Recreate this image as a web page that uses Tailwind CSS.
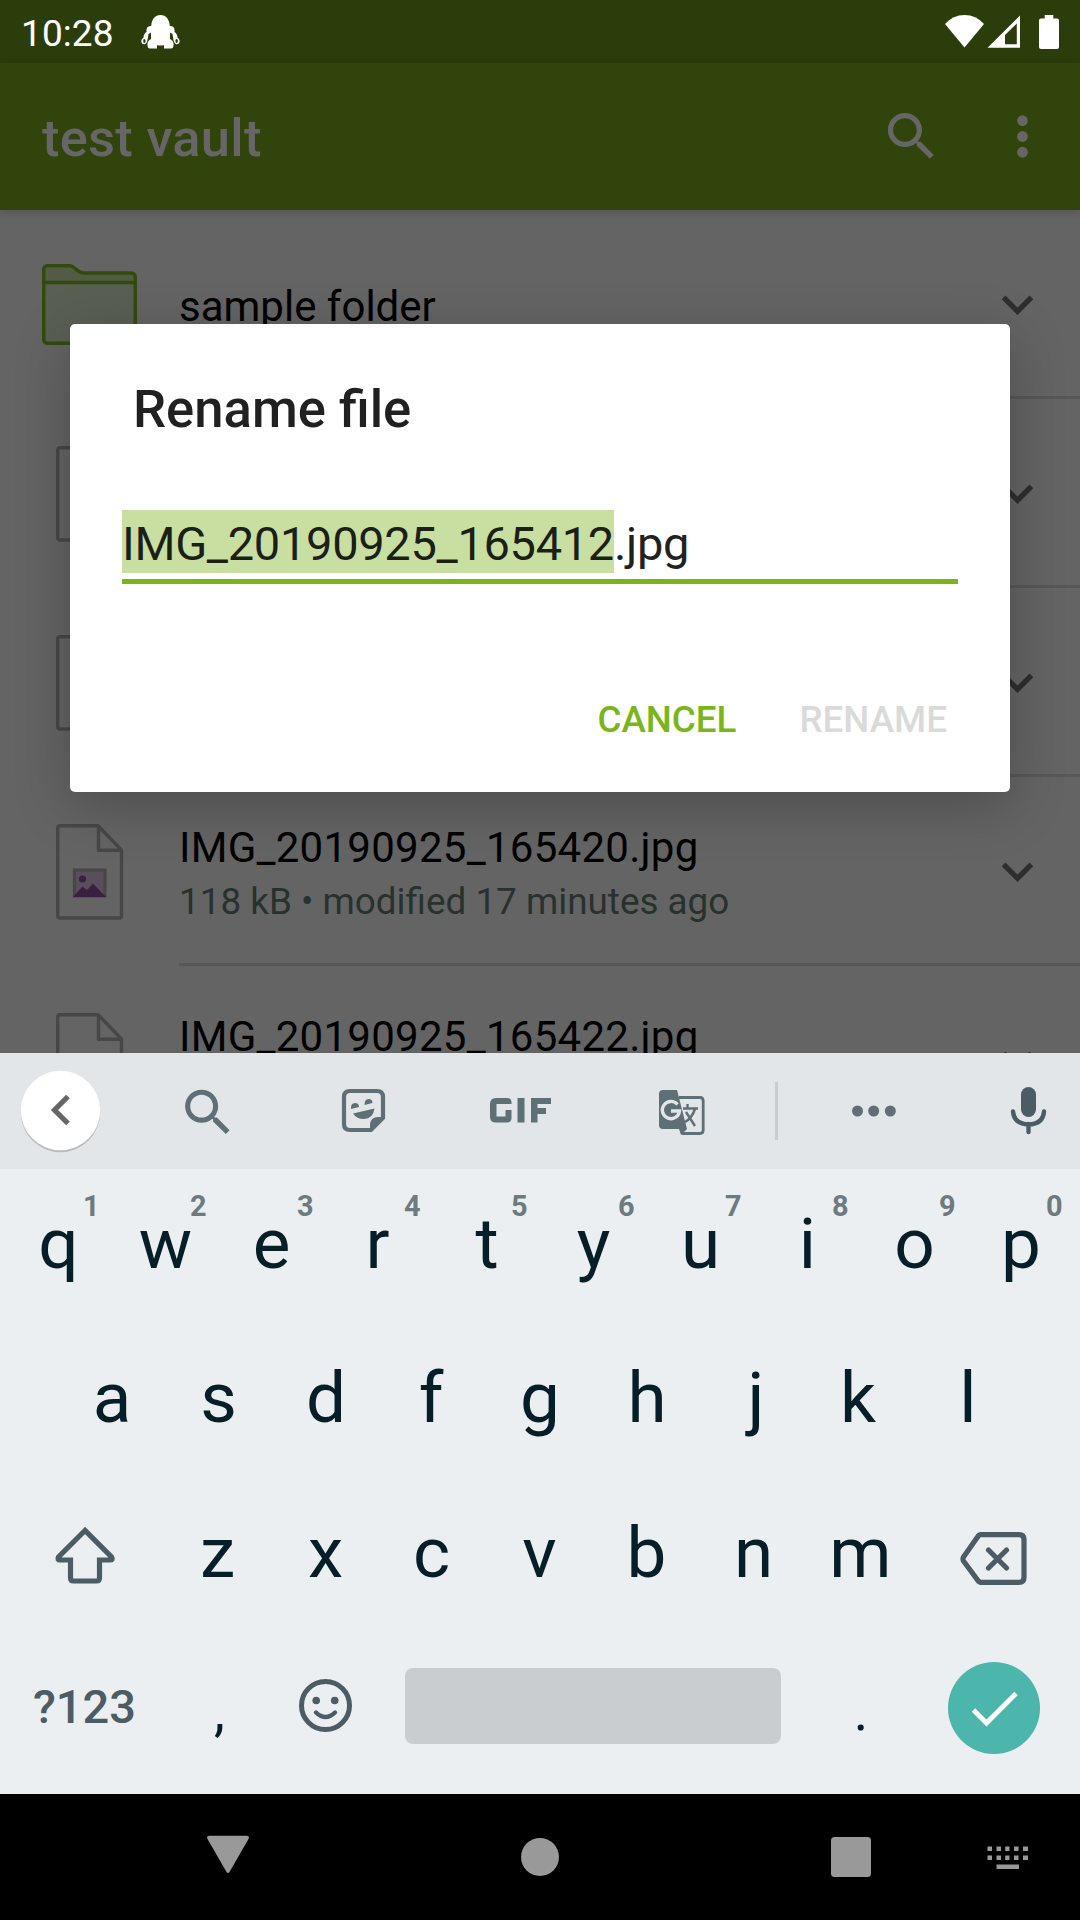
<!DOCTYPE html>
<html lang="en">
<head>
<meta charset="utf-8">
<title>Rename file</title>
<script src="https://cdn.jsdelivr.net/npm/@tailwindcss/browser@4"></script>
</head>
<body class="w-[1080px] h-[1920px] overflow-hidden bg-black font-['Roboto',sans-serif]">
<svg class="hidden">
  <symbol id="file" viewBox="0 0 68 96">
    <path d="M4 1.7H42L65.500 26V92Q65.500 94 63.500 94H4Q1.7 94 1.7 92V4Q1.7 1.7 4 1.7Z M42.5 2V26.2H66" fill="none" stroke="#474747" stroke-width="3.4" stroke-linejoin="round"/>
    <path d="M18.5 46H49V72H18.5Z" fill="#594e5b" stroke="#474747" stroke-width="3.2"/>
    <path d="M17 73L26.5 62.5L31 66L37 59.5L50 73Z" fill="#392040"/>
    <circle cx="26.5" cy="55" r="3.6" fill="#392040"/>
  </symbol>
  <symbol id="chev" viewBox="0 0 24 24"><path d="M7.41 8.59 12 13.17l4.59-4.58L18 10l-6 6-6-6z" fill="#2e2e2e"/></symbol>
  <symbol id="search" viewBox="0 0 24 24"><path fill="currentColor" d="M15.5 14h-.79l-.28-.27C15.41 12.59 16 11.11 16 9.5 16 5.91 13.09 3 9.5 3S3 5.91 3 9.5 5.91 16 9.5 16c1.61 0 3.09-.59 4.23-1.57l.27.28v.79l5 4.99L20.49 19l-4.99-5zm-6 0C7.01 14 5 11.99 5 9.5S7.01 5 9.5 5 14 7.01 14 9.5 11.99 14 9.5 14z"/></symbol>
</svg>
<div class="relative flex h-[1053px] flex-col overflow-hidden bg-[#646464]">
  <!-- status bar -->
  <div class="flex h-[63px] shrink-0 items-center bg-[#2a3d0a] pl-[21px] pr-[21px] text-white">
    <div class="w-[120px] pt-[4px] text-[37px] leading-[59px] tracking-[0.1px]">10:28</div>
    <svg class="h-[34px] w-[39px]" viewBox="0 0 39 34" fill="#fff">
      <path d="M19.500 0C25 0 28.500 4.500 28.800 11Q33.500 11 33.500 15V17Q36.500 19 36.500 22.500Q39.200 24.500 38.600 27Q38 29.500 35.500 29.200Q33 28.500 32.500 25L31.500 19L29 17.500V24Q33 26 32.500 30Q32.500 33.500 30 33.500H23V30Q21 30.800 19.500 30.500Q18 30.800 16 30V33.500H9Q6.500 33.500 6.500 30Q6 26 10 24V17.500L7.500 19L6.500 25Q6 28.500 3.500 29.200Q1 29.500 .4 27Q-.2 24.500 2.500 22.500Q2.500 19 5.500 17V15Q5.500 11 10.200 11C10.500 4.500 14 0 19.500 0Z"/>
      <ellipse cx="3.400" cy="26" rx="1.200" ry="2.100" fill="#2a3d0a"/><ellipse cx="35.600" cy="26" rx="1.200" ry="2.100" fill="#2a3d0a"/>
    </svg>
    <svg class="ml-auto h-[34px] w-[114px]" viewBox="945 14 114 34" fill="#fff">
      <path d="M945 23Q953 14 964.500 14Q976 14 984 23L964.500 46.600Z"/>
      <path fill-rule="evenodd" d="M987.500 46.800L1020 14.500V46.800ZM1005 43.200H1016.800V22.500L1005 34Z"/>
      <path d="M1044.700 14H1053.300V17.500H1057Q1059 17.500 1059 19.500V46Q1059 48 1057 48H1041Q1039 48 1039 46V19.500Q1039 17.500 1041 17.500H1044.700Z"/>
    </svg>
  </div>
  <!-- app bar -->
  <div class="z-10 flex h-[147px] shrink-0 items-center bg-[#30440b] pl-[42px] pr-[26px] text-[#666] shadow-[0_2px_8px_rgba(0,0,0,0.18)]">
    <div class="grow pt-[3px] text-[52.5px] font-medium tracking-[0.25px]">test vault</div>
    <svg class="h-[63px] w-[63px]"><use href="#search"/></svg>
    <svg class="ml-[48px] h-[63px] w-[63px]" viewBox="0 0 24 24" fill="currentColor"><circle cx="12" cy="6" r="2.050"/><circle cx="12" cy="12" r="2.050"/><circle cx="12" cy="18" r="2.050"/></svg>
  </div>
  <!-- file list -->
  <div class="flex h-[189px] shrink-0">
    <div class="w-[179px] pl-[42px] pt-[54px]">
      <svg class="h-[81px] w-[95px]" viewBox="0 0 95 81" fill="#5a5f54" stroke="#324b0c" stroke-width="3.600">
        <path d="M1.700 6Q1.700 1.700 6 1.700H27Q30 1.700 33 4.500L37 7.500Q39 9 42 9H88Q93.300 9 93.300 14V75Q93.300 79.300 89 79.300H6Q1.700 79.300 1.700 75Z"/><path d="M4 4H28L38 11H91V17H4Z" fill="#525b45" stroke="none"/><path d="M1.700 18.500H93.300" fill="none"/></svg>
    </div>
    <div class="flex grow border-b-3 border-[#575757]">
      <div class="grow pt-[72px] text-[42px] leading-[49px]">sample folder</div>
      <svg class="mr-[31.500px] mt-[63px] h-[63px] w-[63px]"><use href="#chev"/></svg>
    </div>
  </div>
  <div class="flex h-[189px] shrink-0">
    <svg class="ml-[56px] mr-[55px] mt-[47px] h-[96px] w-[68px]"><use href="#file"/></svg>
    <div class="flex grow border-b-3 border-[#575757]">
      <div class="grow pt-[46px] text-[42px] leading-[49px] tracking-[0.27px]">IMG_20190925_165412.jpg</div>
      <svg class="mr-[31.500px] mt-[63px] h-[63px] w-[63px]"><use href="#chev"/></svg>
    </div>
  </div>
  <div class="flex h-[189px] shrink-0">
    <svg class="ml-[56px] mr-[55px] mt-[47px] h-[96px] w-[68px]"><use href="#file"/></svg>
    <div class="flex grow border-b-3 border-[#575757]">
      <div class="grow pt-[46px] text-[42px] leading-[49px] tracking-[0.27px]">IMG_20190925_165416.jpg</div>
      <svg class="mr-[31.500px] mt-[63px] h-[63px] w-[63px]"><use href="#chev"/></svg>
    </div>
  </div>
  <div class="flex h-[189px] shrink-0">
    <svg class="ml-[56px] mr-[55px] mt-[47px] h-[96px] w-[68px]"><use href="#file"/></svg>
    <div class="flex grow border-b-3 border-[#575757]">
      <div class="grow pt-[46px] text-[42px] leading-[49px]"><span class="tracking-[0.27px]">IMG_20190925_165420.jpg</span>
        <div class="pt-[8px] text-[36.85px] leading-[43px] text-[#29312f]">118 kB • modified 17 minutes ago</div>
      </div>
      <svg class="mr-[31.500px] mt-[63px] h-[63px] w-[63px]"><use href="#chev"/></svg>
    </div>
  </div>
  <div class="flex h-[189px] shrink-0">
    <svg class="ml-[56px] mr-[55px] mt-[47px] h-[96px] w-[68px]"><use href="#file"/></svg>
    <div class="flex grow">
      <div class="grow pt-[46px] text-[42px] leading-[49px] tracking-[0.27px]">IMG_20190925_165422.jpg</div>
      <svg class="mr-[31.500px] mt-[63px] h-[63px] w-[63px]"><use href="#chev"/></svg>
    </div>
  </div>
  <!-- dialog -->
  <div class="absolute left-[70px] top-[324px] z-20 flex h-[468px] w-[940px] flex-col rounded-[5px] bg-white px-[52px] text-[#212121] shadow-[0_14px_55px_rgba(0,0,0,0.23)]">
    <div class="pl-[11px] pt-[54px] text-[52.6px] font-medium leading-[62px]">Rename file</div>
    <div class="mt-[70px] flex h-[74px] items-start border-b-5 border-[#7ab51b] text-[47px] leading-[57px] tracking-[-0.32px]"><span class="bg-[#c9dfa2] pb-px pt-[5px] text-[#1b1f16]">IMG_20190925_165412</span><span class="pt-[5px]">.jpg</span></div>
    <div class="mt-[114px] flex justify-end gap-[63px] pr-[11px] text-[36.75px] font-medium leading-[43px]"><span class="text-[#7ab51b]">CANCEL</span><span class="text-[#dadada]">RENAME</span></div>
  </div>
</div>
<!-- keyboard -->
<div class="h-[741px] bg-[#ebeff2] text-[#051e28]">
  <div class="h-[116px] bg-[#e2e6e9] text-[#5f6f76]">
    <svg class="h-[116px] w-[1080px]" viewBox="0 1053 1080 116" fill="currentColor">
      <circle cx="60.500" cy="1112.500" r="39.700" fill="#000" opacity=".18"/><circle cx="60.500" cy="1110.500" r="39.700" fill="#fff"/>
      <path d="M68 1096.500L54.500 1110L68 1123.500" fill="none" stroke="#666" stroke-width="5.200"/>
      <svg x="177.500" y="1082" width="61" height="61" viewBox="0 0 24 24"><use href="#search"/></svg>
      <path d="M350 1091H377Q383 1091 383 1097V1118L371 1130H350Q344 1130 344 1124V1097Q344 1091 350 1091Z" fill="none" stroke="currentColor" stroke-width="4.200"/>
      <path d="M370 1132V1124Q371 1117 378 1117H385V1118Z"/>
      <path d="M351 1109Q350.500 1103 355 1103Q359 1103 359 1107ZM364.500 1105Q364.500 1099 368.500 1099Q372.500 1099 372.500 1103ZM353 1113.500L374.500 1108.500Q373 1119 364 1119Q356.500 1119 353 1113.500Z"/>
      <path d="M511.500 1104V1102.500Q511.500 1098 507 1098H496Q490 1098 490 1104V1117Q490 1122.500 496 1122.500H507Q511.500 1122.500 511.500 1118V1110H505.500V1116.500H496.500V1104H511.500ZM517.500 1098H524.500V1122.500H517.500ZM531 1098H551V1104H537.500V1108H546V1114H537.500V1122.500H531Z"/>
      <path d="M663 1090H677L687 1129L681 1135L679 1129H663Q659 1129 659 1125V1094Q659 1090 663 1090Z"/>
      <path d="M679 1097.500H700Q703.200 1097.500 703.200 1101V1130Q703.200 1133.500 700 1133.500H682" fill="none" stroke="currentColor" stroke-width="2.800"/>
      <path d="M677.500 1104.500A8.600 8.600 0 1 0 679.500 1111H671" fill="none" stroke="#e2e6e9" stroke-width="3.300"/>
      <path d="M683 1108.500H698M687.500 1104V1108M695 1109Q692 1118 685 1122M686 1112L695 1126" fill="none" stroke="currentColor" stroke-width="2.400"/>
      <path d="M775 1082H778V1140H775Z" fill="#c9cdd0"/>
      <circle cx="857.500" cy="1111" r="5.500"/><circle cx="873.700" cy="1111" r="5.500"/><circle cx="890.300" cy="1111" r="5.500"/>
      <g color="#4b5c64"><rect x="1021" y="1087" width="15" height="30" rx="7.500" fill="currentColor"/><path d="M1013 1111.500Q1014 1124 1028.500 1124.500Q1043 1124 1044 1111.500M1028.500 1124V1132" fill="none" stroke="currentColor" stroke-width="4.400" stroke-linecap="round"/></g>
    </svg>
  </div>
  <div class="grid grid-cols-10 px-[5px] pt-[33px] text-center text-[71px] leading-[84px]">
    <div class="relative">q<b class="absolute left-[78px] top-[-13px] text-[28.9px] leading-[34px] text-[#6d7a80]">1</b></div>
    <div class="relative">w<b class="absolute left-[78px] top-[-13px] text-[28.9px] leading-[34px] text-[#6d7a80]">2</b></div>
    <div class="relative pr-0.5">e<b class="absolute left-[78px] top-[-13px] text-[28.9px] leading-[34px] text-[#6d7a80]">3</b></div>
    <div class="relative pr-1">r<b class="absolute left-[78px] top-[-13px] text-[28.9px] leading-[34px] text-[#6d7a80]">4</b></div>
    <div class="relative pl-px">t<b class="absolute left-[78px] top-[-13px] text-[28.9px] leading-[34px] text-[#6d7a80]">5</b></div>
    <div class="relative">y<b class="absolute left-[78px] top-[-13px] text-[28.9px] leading-[34px] text-[#6d7a80]">6</b></div>
    <div class="relative">u<b class="absolute left-[78px] top-[-13px] text-[28.9px] leading-[34px] text-[#6d7a80]">7</b></div>
    <div class="relative">i<b class="absolute left-[78px] top-[-13px] text-[28.9px] leading-[34px] text-[#6d7a80]">8</b></div>
    <div class="relative">o<b class="absolute left-[78px] top-[-13px] text-[28.9px] leading-[34px] text-[#6d7a80]">9</b></div>
    <div class="relative pr-px">p<b class="absolute left-[78px] top-[-13px] text-[28.9px] leading-[34px] text-[#6d7a80]">0</b></div>
  </div>
  <div class="grid grid-cols-9 px-[58.5px] pt-[70px] text-center text-[71px] leading-[84px]">
    <div>a</div><div class="pr-px">s</div><div>d</div><div class="pr-1">f</div><div>g</div><div>h</div><div class="pl-1">j</div><div class="pr-1.5">k</div><div>l</div>
  </div>
  <div class="flex pt-[71px] text-center text-[71px] leading-[84px]">
    <svg class="h-[84px] w-[165px]" viewBox="0 1511 165 84"><path d="M85 1530.500L58.500 1557Q57 1560 60 1560H70.500V1578Q70.500 1581 73.500 1581H96.500Q99.500 1581 99.500 1578V1560H110Q113.500 1560 111.500 1557Z" fill="none" stroke="#4b5c64" stroke-width="5.200"/></svg>
    <div class="grid w-[749px] grid-cols-7"><div class="pr-0.5">z</div><div>x</div><div class="pr-0.5">c</div><div>v</div><div>b</div><div>n</div><div>m</div></div>
    <svg class="h-[84px] w-[166px]" viewBox="914 1511 166 84"><path d="M981 1534.700H1019Q1024 1534.700 1024 1539.500V1577.500Q1024 1582.300 1019 1582.300H981Q979 1582.300 977.500 1580L963.500 1561Q962.500 1559 963.500 1557L977.500 1537Q979 1534.700 981 1534.700ZM988.500 1550L1006.500 1568M1006.500 1550L988.500 1568" fill="none" stroke="#4b5c64" stroke-width="5.200" stroke-linecap="round"/></svg>
  </div>
  <div class="flex pt-[73px]">
    <div class="w-[168px] pl-[1px] pt-[11px] text-center text-[47px] font-medium leading-[55px] text-[#4b5c64]">?123</div>
    <div class="w-[103px] pt-[11px] text-center text-[55px] leading-[64px]">,</div>
    <svg class="mt-[11px] h-[54px] w-[109px]" viewBox="271 1679 109 54"><circle cx="325.500" cy="1705.500" r="24" fill="none" stroke="#4b5c64" stroke-width="5"/><circle cx="316.200" cy="1700.500" r="3.800" fill="#4b5c64"/><circle cx="334.700" cy="1700.500" r="3.800" fill="#4b5c64"/><path d="M316 1712.500Q325.500 1721.500 335 1712.500" fill="none" stroke="#4b5c64" stroke-width="4.400" stroke-linecap="round"/></svg>
    <div class="ml-[25px] h-[76px] w-[376px] rounded-[8px] bg-[#c9cdd0]"></div>
    <div class="w-[158px] pl-[2px] pt-[11px] text-center text-[55px] leading-[64px]">.</div>
    <svg class="-mt-[6px] ml-[9px] h-[92px] w-[92px]" viewBox="948 1662 92 92"><circle cx="994" cy="1708" r="46" fill="#4cb5ac"/><path d="M973.500 1710L986.500 1723L1016 1693.500" fill="none" stroke="#fff" stroke-width="4.800"/></svg>
  </div>
</div>
<!-- navigation bar -->
<svg class="block h-[126px] w-[1080px] bg-black" viewBox="0 1794 1080 126" fill="#999">
  <path d="M209.500 1835.700H246.500Q250 1836 248.500 1839L229.500 1872Q228 1874 226.500 1872L207.500 1839Q206 1836 209.500 1835.700Z"/>
  <circle cx="540" cy="1857" r="19"/><rect x="831" y="1837" width="40" height="40" rx="3.500"/>
  <path d="M987.500 1846.500H1028V1851H987.500ZM987.500 1855.500H1028V1860H987.500ZM996.500 1864.500H1019V1869H996.500Z"/>
  <path d="M992 1846H996.500V1861H992ZM1001 1846H1005.200V1861H1001ZM1009.500 1846H1014V1861H1009.500ZM1018.500 1846H1023V1861H1018.500Z" fill="#000"/>
</svg>
</body>
</html>
